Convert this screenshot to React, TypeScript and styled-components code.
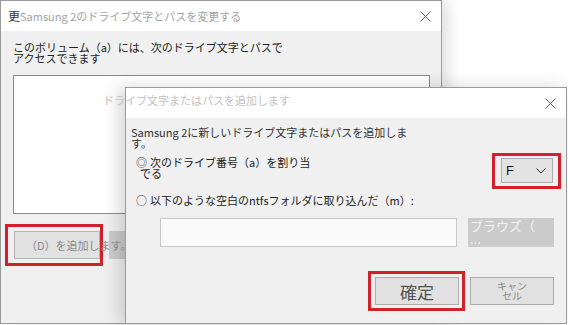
import React from 'react';
import styled, { createGlobalStyle } from 'styled-components';

const GlobalStyle = createGlobalStyle`
  html, body {
    margin: 0;
    padding: 0;
    background: #ffffff;
    font-family: "Noto Sans CJK JP", "Noto Sans", sans-serif;
  }
  * {
    box-sizing: border-box;
  }
`;

const Desktop = styled.div`
  position: relative;
  width: 568px;
  height: 325px;
  overflow: hidden;
  background: #ffffff;
`;

const Window = styled.div<{ left: number; top: number; w: number; h: number; shadow: string }>`
  position: absolute;
  left: ${({ left }) => left}px;
  top: ${({ top }) => top}px;
  width: ${({ w }) => w}px;
  height: ${({ h }) => h}px;
  border: 1px solid #9a9a9a;
  background: #f0f0f0;
  box-shadow: ${({ shadow }) => shadow};
  display: flex;
  flex-direction: column;
`;

const TitleBar = styled.div<{ h: number }>`
  position: relative;
  height: ${({ h }) => h}px;
  flex: none;
  background: #ffffff;
  display: flex;
  align-items: center;
  padding: 0 10px 0 7px;
`;

const AppGlyph = styled.span`
  font-size: 12px;
  color: #333;
  line-height: 12px;
`;

const TitleText = styled.span`
  font-size: 11px;
  color: #a4a4a4;
  line-height: 11px;
  white-space: nowrap;
`;

const FloatingTitle = styled.span`
  position: absolute;
  left: -23px;
  top: 6px;
  font-size: 11px;
  line-height: 12px;
  color: #c2c2c2;
  white-space: nowrap;
`;

const CloseButton = styled.span`
  margin-left: auto;
  display: flex;
  align-items: center;
  justify-content: center;
  width: 12px;
  height: 12px;
`;

const Body = styled.div<{ pad: string }>`
  flex: 1;
  display: flex;
  flex-direction: column;
  padding: ${({ pad }) => pad};
`;

const Text = styled.div<{ color?: string }>`
  font-size: 11px;
  line-height: 11px;
  color: ${({ color }) => color || '#222'};
  white-space: nowrap;
`;

const ListBox = styled.div`
  margin-top: 11px;
  width: 417px;
  height: 139px;
  background: #ffffff;
  border: 1px solid #8a8a8a;
`;

const Highlight = styled.div<{ pad: string }>`
  position: relative;
  z-index: 1;
  border: 3px solid #d2202c;
  padding: ${({ pad }) => pad};
  display: flex;
  flex: none;
`;

const BackButtonRow = styled.div`
  margin-top: 10px;
  margin-left: -8px;
  display: flex;
  align-items: center;
  gap: 6px;
`;

const AddButton = styled.div`
  width: 86px;
  height: 28px;
  background: #e1e1e1;
  border: 1px solid #b4b4b4;
  display: flex;
  align-items: center;
  padding-left: 11px;
  font-size: 11px;
  color: #8a8a8a;
  white-space: nowrap;
  overflow: visible;
`;

const GreyBlock = styled.div`
  width: 16px;
  height: 28px;
  background: #cbcbcb;
`;

const OptionRow = styled.div`
  display: flex;
  justify-content: space-between;
  align-items: flex-start;
  margin-top: 4px;
`;

const RadioLabel = styled.div<{ top: number }>`
  margin-top: ${({ top }) => top}px;
  padding-left: 5px;
  font-size: 11px;
  line-height: 11px;
  color: #222;
  white-space: nowrap;
`;

const RadioMark = styled.span`
  margin-right: 3px;
  color: #333;
`;

const Indent = styled.span`
  padding-left: 4px;
`;

const Select = styled.div`
  width: 52px;
  height: 25px;
  background: #e3e3e3;
  border: 1px solid #adadad;
  display: flex;
  align-items: center;
  justify-content: space-between;
  padding: 0 6px 0 4px;
  font-family: "Liberation Sans", Arial, sans-serif;
  font-size: 13px;
  color: #111;
`;

const InputRow = styled.div`
  margin-top: 12px;
  margin-left: 29px;
  display: flex;
  gap: 11px;
`;

const PathInput = styled.div`
  width: 297px;
  height: 29px;
  background: #fafafa;
  border: 1px solid #c8c8c8;
`;

const BrowseButton = styled.div`
  width: 86px;
  height: 29px;
  background: #cbcbcb;
  padding: 1px 0 0 2px;
  font-size: 13px;
  line-height: 13px;
  color: #f4f4f4;
  white-space: nowrap;
`;

const Footer = styled.div`
  margin-top: 24px;
  display: flex;
  justify-content: flex-end;
  align-items: center;
  gap: 5px;
  padding-right: 7px;
`;

const DialogButton = styled.div<{ size: number; color: string }>`
  width: 84px;
  height: 28px;
  background: #e1e1e1;
  border: 1px solid #adadad;
  display: flex;
  align-items: center;
  justify-content: center;
  text-align: center;
  font-size: ${({ size }) => size}px;
  line-height: ${({ size }) => (size < 12 ? 10 : size)}px;
  color: ${({ color }) => color};
`;

const CloseIcon = () => (
  <svg width="11" height="11" viewBox="0 0 11 11">
    <path d="M0.5 0.5 L10.5 10.5 M10.5 0.5 L0.5 10.5" stroke="#555" strokeWidth="1" fill="none" />
  </svg>
);

const Chevron = () => (
  <svg width="10" height="6" viewBox="0 0 10 6">
    <polyline points="0.5,0.5 5,5 9.5,0.5" stroke="#333" strokeWidth="1" fill="none" />
  </svg>
);

const App: React.FC = () => {
  return (
    <>
      <GlobalStyle />
      <Desktop>
        <Window left={0} top={0} w={442} h={324} shadow="6px 0 14px rgba(0,0,0,0.13)">
          <TitleBar h={30}>
            <AppGlyph>更</AppGlyph>
            <TitleText>Samsung 2のドライブ文字とパスを変更する</TitleText>
            <CloseButton>
              <CloseIcon />
            </CloseButton>
          </TitleBar>
          <Body pad="11px 0 0 12px">
            <Text>
              このボリューム（a）には、次のドライブ文字とパスで
              <br />
              アクセスできます
            </Text>
            <ListBox />
            <BackButtonRow>
              <Highlight pad="4px 0 4px 6px">
                <AddButton>（D）を追加します。</AddButton>
              </Highlight>
              <GreyBlock />
            </BackButtonRow>
          </Body>
        </Window>

        <Window left={125} top={87} w={442} h={237} shadow="-6px 0 16px rgba(0,0,0,0.16)">
          <TitleBar h={30}>
            <FloatingTitle>ドライブ文字またはパスを追加します</FloatingTitle>
            <CloseButton>
              <CloseIcon />
            </CloseButton>
          </TitleBar>
          <Body pad="9px 5px 0 5px">
            <Text color="#333">
              Samsung 2に新しいドライブ文字またはパスを追加しま
              <br />
              す。
            </Text>
            <OptionRow>
              <RadioLabel top={4}>
                <RadioMark>◎</RadioMark>次のドライブ番号（a）を割り当
                <br />
                <Indent>でる</Indent>
              </RadioLabel>
              <Highlight pad="2px 5px 3px 6px">
                <Select>
                  <span>F</span>
                  <Chevron />
                </Select>
              </Highlight>
            </OptionRow>
            <RadioLabel top={6}>
              <RadioMark>○</RadioMark>以下のような空白のntfsフォルダに取り込んだ（m）:
            </RadioLabel>
            <InputRow>
              <PathInput />
              <BrowseButton>
                ブラウズ（
                <br />
                ...
              </BrowseButton>
            </InputRow>
            <Footer>
              <Highlight pad="3px 3px 3px 4px">
                <DialogButton size={17} color="#505050">
                  確定
                </DialogButton>
              </Highlight>
              <DialogButton size={10} color="#8a8a8a">
                キャン
                <br />
                セル
              </DialogButton>
            </Footer>
          </Body>
        </Window>
      </Desktop>
    </>
  );
};

export default App;
